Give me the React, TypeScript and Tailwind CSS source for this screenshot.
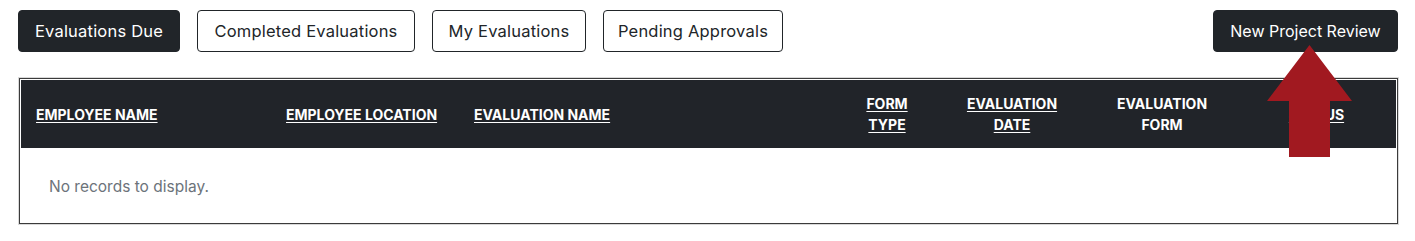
import React from "react";

const font = { fontFamily: 'Inter, "Open Sans", "Liberation Sans", sans-serif' };

export default function App() {
  return (
    <div className="relative w-[1415px] h-[241px] bg-white text-[#212529]" style={font}>
      <div className="flex items-center gap-[17px] pt-[10px] pl-[18px] pr-[17px]">
        <button className="h-[42px] w-[162px] rounded-[4px] bg-[#212529] border border-[#212529] text-white text-[16.5px] tracking-[0.2px]">
          Evaluations Due
        </button>
        <button className="h-[42px] w-[218px] rounded-[4px] bg-white border border-[#212529] text-[#212529] text-[16.5px] tracking-[0.2px]">
          Completed Evaluations
        </button>
        <button className="h-[42px] w-[154px] rounded-[4px] bg-white border border-[#212529] text-[#212529] text-[16.5px] tracking-[0.2px]">
          My Evaluations
        </button>
        <button className="h-[42px] w-[180px] rounded-[4px] bg-white border border-[#212529] text-[#212529] text-[16.5px] tracking-[0.2px]">
          Pending Approvals
        </button>
        <div className="flex-1" />
        <button className="h-[42px] w-[185px] rounded-[4px] bg-[#212529] border border-[#212529] text-white text-[16px]">
          New Project Review
        </button>
      </div>

      <div className="mt-[25px] ml-[18px] w-[1381px] border border-[#d9d9d9]">
        <div className="border border-[#3b3b3b] p-px bg-white">
          <div className="grid grid-cols-[250px_188px_378px_100px_150px_150px_1fr] items-center h-[68px] bg-[#212429] text-white text-[14px] font-bold leading-[21px]">
            <div className="pl-[15px]"><span className="underline underline-offset-2">EMPLOYEE NAME</span></div>
            <div className="pl-[15px]"><span className="underline underline-offset-2">EMPLOYEE LOCATION</span></div>
            <div className="pl-[15px]"><span className="underline underline-offset-2">EVALUATION NAME</span></div>
            <div className="text-center"><span className="underline underline-offset-2">FORM</span><br /><span className="underline underline-offset-2">TYPE</span></div>
            <div className="text-center"><span className="underline underline-offset-2">EVALUATION</span><br /><span className="underline underline-offset-2">DATE</span></div>
            <div className="text-center">EVALUATION<br />FORM</div>
            <div className="text-center"><span className="underline underline-offset-2">STATUS</span></div>
          </div>
          <div className="h-[74px] flex items-center pl-[28px] pt-[3px] text-[15.5px] text-[#6c737a]">
            No records to display.
          </div>
        </div>
      </div>

      <svg className="absolute left-0 top-0 pointer-events-none" width="1415" height="241" viewBox="0 0 1415 241">
        <polygon points="1309.5,45 1352,101 1330,101 1330,157 1289,157 1289,101 1267,101" fill="#a11920" />
      </svg>
    </div>
  );
}
